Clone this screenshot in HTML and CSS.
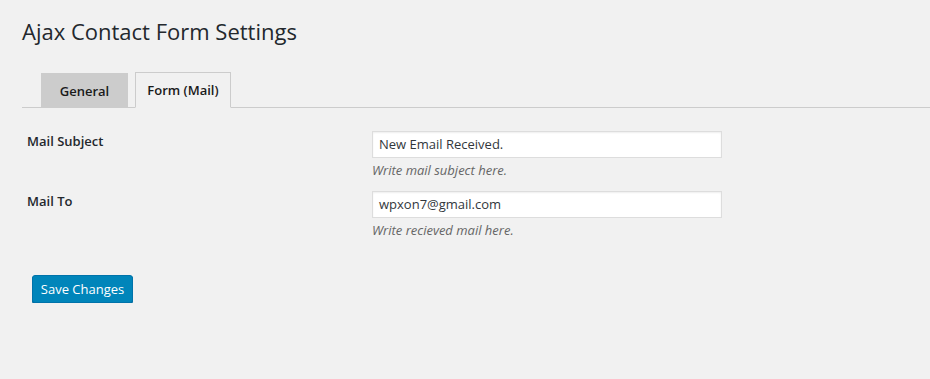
FILE: index.html
```html
<!DOCTYPE html>
<html>
<head>
<meta charset="utf-8">
<link rel="stylesheet" href="styles.css">
</head>
<body>
<div class="wrap">
  <h1 class="title">Ajax Contact Form Settings</h1>
  <div class="tabs">
    <a class="tab">General</a>
    <a class="tab tab-active">Form (Mail)</a>
  </div>
  <div class="form">
    <div class="row">
      <div class="label">Mail Subject</div>
      <div class="field">
        <div class="input">New Email Received.</div>
        <p class="desc">Write mail subject here.</p>
      </div>
    </div>
    <div class="row">
      <div class="label">Mail To</div>
      <div class="field">
        <div class="input">wpxon7@gmail.com</div>
        <p class="desc">Write recieved mail here.</p>
      </div>
    </div>
  </div>
  <div class="submit">
    <button class="button">Save Changes</button>
  </div>
</div>
</body>
</html>
```

FILE: styles.css
```css
html, body {
  margin: 0;
  padding: 0;
  background: #f1f1f1;
  color: #23282d;
  font-family: "Open Sans", "Noto Sans", sans-serif;
  font-size: 13px;
}
.wrap {
  padding: 0 0 0 22px;
}
.title {
  margin: 0;
  padding-top: 16px;
  font-size: 22px;
  font-weight: 400;
  line-height: 30px;
  color: #23282d;
}
.tabs {
  display: flex;
  margin-top: 27px;
  padding-left: 19px;
  border-bottom: 1px solid #ccc;
  height: 34px;
  align-items: flex-end;
}
.tab {
  display: block;
  box-sizing: border-box;
  border: 1px solid #ccc;
  background: #ccc;
  font-size: 13px;
  font-weight: 600;
  line-height: 24px;
  padding: 5px 0;
  text-align: center;
  color: #1a1a1a;
}
.tab:first-child {
  width: 87px;
  height: 34px;
  border-bottom: none;
}
.tab-active {
  width: 96px;
  height: 36px;
  margin-left: 7px;
  margin-bottom: -1px;
  background: #f1f1f1;
  border-bottom-color: #f1f1f1;
}
.form {
  padding-top: 14px;
}
.row {
  display: flex;
  height: 60px;
}
.label {
  width: 345px;
  padding-left: 5px;
  font-weight: 600;
  font-size: 13px;
  line-height: 20px;
  padding-top: 9px;
  color: #23282d;
}
.field {
  padding-top: 9px;
}
.input {
  box-sizing: border-box;
  width: 350px;
  height: 27px;
  background: #fff;
  border: 1px solid #ddd;
  box-shadow: inset 0 1px 2px rgba(0,0,0,.07);
  padding: 0 6px;
  font-size: 13px;
  line-height: 25px;
  color: #32373c;
}
.desc {
  margin: 2px 0 0;
  font-style: italic;
  font-size: 13px;
  line-height: 20px;
  color: #666;
}
.submit {
  padding-top: 33px;
  padding-left: 10px;
}
.button {
  display: block;
  box-sizing: border-box;
  width: 101px;
  height: 28px;
  padding: 0;
  background: #0085ba;
  border: 1px solid #0073aa;
  border-radius: 3px;
  box-shadow: 0 1px 0 #006799;
  color: #fff;
  font-family: "Open Sans", "Noto Sans", sans-serif;
  font-size: 13px;
  line-height: 26px;
  text-align: center;
}
```
